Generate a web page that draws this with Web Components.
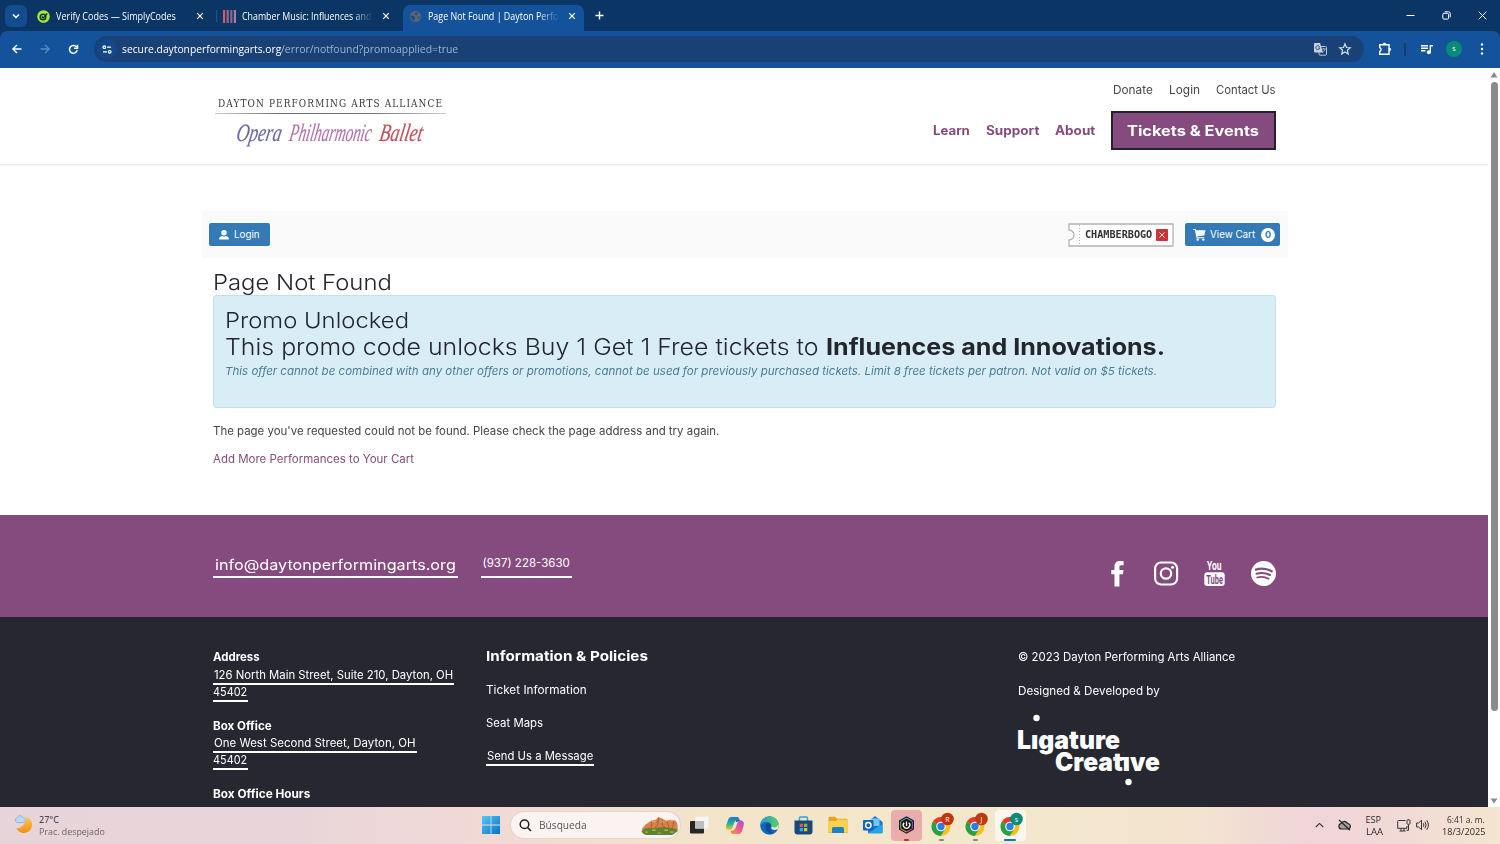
<!DOCTYPE html>
<html lang="en">
<head>
<meta charset="utf-8">
<title>Page Not Found | Dayton Performing Arts Alliance</title>
<style>
  * { box-sizing: border-box; }
  html, body { margin: 0; height: 844px; overflow: hidden; background: #fff; }
  body {
    display: flex;
    flex-direction: column;
    width: 1500px;
    font-family: Inter, "Liberation Sans", sans-serif;
  }
</style>
</head>
<body>
  <browser-chrome></browser-chrome>
  <page-viewport>
    <site-header></site-header>
    <site-main></site-main>
    <contact-band></contact-band>
    <site-footer></site-footer>
  </page-viewport>
  <task-bar></task-bar>

<script>
const base = `
  *, :host { box-sizing: border-box; }
  svg { display: block; overflow: visible; }
`;

function define(name, html) {
  const template = document.createElement('template');
  template.innerHTML = html;
  customElements.define(name, class extends HTMLElement {
    constructor() {
      super();
      this.attachShadow({ mode: 'open' }).appendChild(template.content.cloneNode(true));
    }
  });
}

// ---- icons ----
const chromeLogo = (color, letter) => `<svg width="21" height="24" viewBox="0 0 21 24">
  <circle cx="10" cy="13.500" r="9.500" fill="#fbc116"/>
  <path d="M10 13.500L1.800 8.700A9.500 9.500 0 0 1 18.200 8.700L10 8.700Z" fill="#e33b2e"/>
  <path d="M10 13.500L1.800 8.700A9.500 9.500 0 0 0 9.600 23L14.200 15.900Z" fill="#25a146"/>
  <circle cx="10" cy="13.500" r="4.800" fill="#fff"/><circle cx="10" cy="13.500" r="3.700" fill="#2b7de9"/>
  <circle cx="16.500" cy="6" r="6.300" fill="${color}"/>
  <text x="16.500" y="8.600" text-anchor="middle" font-size="7" font-family="Open Sans, sans-serif" fill="#fff">${letter}</text></svg>`;

const icons = {
  down: `<svg width="10" height="10" fill="none" stroke="#fff" stroke-width="1.500"><path d="M2 3.500L5 6.500L8 3.500"/></svg>`,
  close: `<svg width="8" height="8" stroke="#fff" stroke-width="1.200"><path d="M1.200 1.200L6.800 6.800M6.800 1.200L1.200 6.800"/></svg>`,
  plus: `<svg width="9" height="9" stroke="#fff" stroke-width="1.400"><path d="M4.500 .5V8.500M.5 4.500H8.500"/></svg>`,
  simply: `<svg width="13" height="13" viewBox="0 0 13 13"><circle cx="6.500" cy="6.500" r="6.300" fill="#a5e83d"/>
    <g fill="none" stroke="#163c22" stroke-width="1.500"><circle cx="6" cy="7" r="2.800"/><path d="M4.700 6.500L6.200 8L10.200 3.600"/></g></svg>`,
  bars: `<svg width="13" height="13"><path fill="#c4606c" d="M0 0h2.200v13H0z"/><path fill="#a5618a" d="M3.600 0h2.200v13h-2.200z"/><path fill="#8a6598" d="M7.200 0h2.200v13h-2.200z"/><path fill="#a87f9f" d="M10.800 0h2.200v13h-2.200z"/></svg>`,
  globe: `<svg width="13" height="13" viewBox="0 0 13 13"><circle cx="6.500" cy="6.500" r="5.500" fill="#5d6570"/><path fill="#144d90" d="M2 5.500L4.500 6L6 7.500L5.500 10.500Q3 10 2.200 7.500ZM6.500 2.200L9 3L8 5L6 4.800ZM8.500 7L10.800 6.500L9.800 9Z"/></svg>`,
  min: `<svg width="9" height="9" stroke="#fff"><path d="M.5 4.500H8.500"/></svg>`,
  restore: `<svg width="9" height="9" fill="none" stroke="#fff"><rect x=".8" y="2.300" width="5.800" height="5.800" rx="1.200"/><path d="M2.600 .8H6.600A1.600 1.600 0 0 1 8.200 2.400V6.300"/></svg>`,
  wclose: `<svg width="9" height="9" stroke="#fff"><path d="M.7 .7L8.300 8.300M8.300 .7L.7 8.300"/></svg>`,
  back: `<svg width="10" height="10" fill="none" stroke="#fff" stroke-width="1.400"><path d="M9.500 5H1.300M5 .9L.9 5L5 9.100"/></svg>`,
  forward: `<svg width="10" height="10" fill="none" stroke="#5c8cc4" stroke-width="1.300"><path d="M.5 5H8.700M5 .9L9.100 5L5 9.100"/></svg>`,
  reload: `<svg width="11" height="11" fill="none" stroke="#fff" stroke-width="1.500"><path d="M9.200 6.300A3.900 3.900 0 1 1 8.600 3.100"/><path d="M9.500 .8V4.200H6.100"/></svg>`,
  tune: `<svg width="10" height="9" fill="none" stroke="#fff" stroke-width="1.200"><circle cx="2.300" cy="2.200" r="1.300"/><path d="M5 2.200H9M1 6.800H5"/><circle cx="7.700" cy="6.800" r="1.300"/></svg>`,
  translate: `<svg width="13" height="13" viewBox="0 0 13 13"><rect x="5" y="3.500" width="7.500" height="8.700" rx="1" fill="none" stroke="#bcc9db"/><path d="M1 0H6L9 9.500H1A1 1 0 0 1 0 8.500V1A1 1 0 0 1 1 0Z" fill="#c8d0dc"/>
    <path d="M5.600 3.700A2 2 0 1 0 5.800 5H4" fill="none" stroke="#31507c"/><path d="M8 6h3.700M9.800 5v1M11 6.200C10.500 8 9 9 8.500 9.500" fill="none" stroke="#bcc9db" stroke-width=".8"/></svg>`,
  star: `<svg width="12" height="12" viewBox="0 0 12 12" fill="none" stroke="#d4deeb" stroke-width="1.200"><path d="M6 .9L7.500 4.500L11.300 4.800L8.400 7.300L9.300 11L6 9L2.700 11L3.600 7.300L.7 4.800L4.500 4.500Z"/></svg>`,
  puzzle: `<svg width="14" height="14" viewBox="0 0 14 14" fill="none" stroke="#fff" stroke-width="1.400"><path d="M1.700 2.800H11V12.200H1.700V9.400A2 2 0 0 0 1.700 5.600Z"/><path d="M5 2.500A1.400 1.400 0 0 1 7.800 2.500ZM11.300 6A1.400 1.400 0 0 1 11.300 8.800Z" fill="#fff" stroke-width=".8"/></svg>`,
  media: `<svg width="12" height="11" viewBox="0 0 12 11"><path d="M0 1.700H7M0 4.200H7M0 6.700H4.500M9.300 8V1.700H12" fill="none" stroke="#fff" stroke-width="1.400"/><circle cx="7.900" cy="8.200" r="2" fill="#fff"/></svg>`,
  dots: `<svg width="4" height="12" fill="#fff"><circle cx="2" cy="1.500" r="1.200"/><circle cx="2" cy="6" r="1.200"/><circle cx="2" cy="10.500" r="1.200"/></svg>`,
  user: `<svg width="10" height="10" viewBox="0 0 10 10" fill="#fff"><circle cx="5" cy="2.800" r="2.700"/><path d="M.2 9.500V8.500C.2 6.800 2 6.300 3.300 6.100Q5 7.200 6.700 6.100C8 6.300 9.800 6.800 9.800 8.500V9.500Z"/></svg>`,
  cart: `<svg width="13" height="12" viewBox="0 0 13 12" fill="#fff"><path d="M0 0H2.600L3 1.300H12.500L11.300 6.500L4.300 7.300L4.500 8.200H11.200V9.200H3.600L1.900 1H0Z"/><circle cx="4.700" cy="10.600" r="1.200"/><circle cx="10.300" cy="10.600" r="1.200"/></svg>`,
  facebook: `<svg width="13" height="26" viewBox="0 0 13 26" fill="#fff"><path d="M12.600 .2V4.300H10.200C8.700 4.300 8.400 5 8.400 6.100V8.900H12.500L12 13.200H8.400V25.400H3.500V13.200H.3V8.900H3.500V5.600C3.500 2 5.600 .1 9 .1C10.700 .1 12.100 .2 12.600 .2Z"/></svg>`,
  instagram: `<svg width="24" height="26" viewBox="0 0 24 26"><g fill="none" stroke="#fff" stroke-width="2.200"><rect x="1.100" y="1.500" width="22" height="22" rx="6"/><circle cx="12" cy="12.500" r="5.200"/></g><circle cx="18.600" cy="6.200" r="1.500" fill="#fff"/></svg>`,
  youtube: `<svg width="21" height="26" viewBox="0 0 21 26" font-family="Roboto, sans-serif" font-weight="700"><text x="3" y="8.900" font-size="12.500" textLength="14.500" lengthAdjust="spacingAndGlyphs" fill="#fff">You</text><rect x=".3" y="11.300" width="20.400" height="13.700" rx="3" fill="#fff"/>
    <text x="2.200" y="22.700" font-size="12.500" textLength="16.800" lengthAdjust="spacingAndGlyphs" fill="#864b7e">Tube</text></svg>`,
  spotify: `<svg width="25" height="26" viewBox="0 0 25 26"><circle cx="12.500" cy="12.500" r="12.500" fill="#fff"/><g fill="none" stroke="#864b7e" stroke-linecap="round"><path d="M4.900 8.600Q13 6.200 20.700 10.200" stroke-width="2.300"/><path d="M5.500 12.700Q12.500 10.600 19 14" stroke-width="2"/><path d="M6.100 16.500Q12.300 14.800 17.700 17.800" stroke-width="1.600"/></g></svg>`,
  weather: `<svg width="19" height="19" viewBox="0 0 19 19"><defs><linearGradient id="m" x2="0" y2="1"><stop stop-color="#fbc94a"/><stop offset="1" stop-color="#ef8f1c"/></linearGradient></defs><path d="M12.700 2A8.300 8.300 0 1 1 2.200 13.200Q10.500 13.500 12.700 2Z" fill="url(#m)"/>
    <path d="M2.800 7.600A2.600 2.600 0 0 1 3.200 2.700Q6 -1.300 8.600 2.300Q11.600 2.500 11.400 5.200Q11 7.600 9 7.600Z" fill="#bcd8f7" stroke="#7fa9dc" stroke-width=".7"/></svg>`,
  windows: `<svg width="18" height="18" viewBox="0 0 18 18"><defs><linearGradient id="w" x2="1" y2="1"><stop stop-color="#52c9f5"/><stop offset="1" stop-color="#0672ca"/></linearGradient></defs><path fill="url(#w)" d="M0 0H8.600V8.600H0ZM9.400 0H18V8.600H9.400ZM0 9.400H8.600V18H0ZM9.400 9.400H18V18H9.400Z"/></svg>`,
  search: `<svg width="13" height="13" fill="none" stroke="#222" stroke-width="1.500"><circle cx="5.500" cy="5.300" r="4.300"/><path d="M8.600 8.500L12 12"/></svg>`,
  canyon: `<svg width="38" height="19" viewBox="0 0 39 20"><path d="M0 15Q3 9 6 8L10 5L15 4L18 1L22 3L26 5L31 4L36 5L38 9V17Z" fill="#d98245"/><path d="M11 6L10 12M18 2L17 9L14 13M22 4L22 10L26 13M27 6L29 12M34 5L33 12" stroke="#a05c3c" fill="none"/><path d="M11 6H15M20 5L24 7M30 5H35" stroke="#f1ae6b"/>
    <path d="M0 16Q5 11 14 13Q23 10 38 14Q37 18 32 20H5Q1 19 0 16Z" fill="#5f8132"/><path d="M4 17h3M11 15h4M17 18h3M24 15h4M30 17h4" stroke="#a6b846" stroke-width="1.500"/></svg>`,
  desktops: `<svg width="19" height="18" viewBox="0 0 19 18"><rect x="0" y="5" width="14" height="12.500" rx="1" fill="#262626"/><rect x="5" y=".5" width="13.500" height="12" rx="1" fill="#f4f4f2"/><path d="M5 5H14V12.500H5Z" fill="#bdbdbb"/></svg>`,
  copilot: `<svg width="18" height="17" viewBox="0 0 18 17"><defs><linearGradient id="a" x2="0" y2="1"><stop stop-color="#1976d8"/><stop offset=".55" stop-color="#31b58a"/><stop offset="1" stop-color="#edca34"/></linearGradient><linearGradient id="b" x1="1" x2="0" y2="1"><stop stop-color="#a84be0"/><stop offset=".5" stop-color="#ec5c92"/><stop offset="1" stop-color="#f59b3f"/></linearGradient></defs>
    <path d="M10 0Q13 0 13.500 3.500H16L10 5Z" fill="#1b4fb8"/><path d="M5.500 0H11Q13 0 13.500 3L10 3.500Q8.500 4 7.800 7L6.300 11Q5.800 13 3 13Q-.8 13 .2 8.500L2 3Q3 0 5.500 0Z" fill="url(#a)"/><path d="M12.500 17H7Q5 17 4.500 14L7 13.500Q9.200 13 10 10L11.500 5.500Q12.200 3.500 15 3.500Q18.500 4 17.700 8L16 14Q15 17 12.500 17Z" fill="url(#b)"/></svg>`,
  edge: `<svg width="19" height="19" viewBox="0 0 19 19"><defs><linearGradient id="e" x1="0" x2="1"><stop stop-color="#2494d8"/><stop offset="1" stop-color="#5bd45b"/></linearGradient></defs><circle cx="9.500" cy="9.500" r="9.300" fill="#1566b8"/><path d="M.2 9.500A9.300 9.300 0 0 1 18.800 9.500Q18.500 13 14.500 13Q10.500 13 11.500 10.500Q11.500 6 7 6Q2 6 .2 9.500Z" fill="url(#e)"/>
    <path d="M8 7Q4.500 8 5.500 12.500Q7.500 18 13.500 17.500Q9 14.500 10.800 11Q11.800 8 8 7Z" fill="#0b4c97"/><path d="M10.500 9Q13 10 11.200 12.200Q12.500 15 18 13.300Q19 10 18.500 8Q17 12 13.500 11.500Z" fill="#eee4cc"/></svg>`,
  store: `<svg width="19" height="19" viewBox="0 0 19 19"><path d="M5.500 5V2.200Q5.500 1 6.700 1H12.300Q13.500 1 13.500 2.200V5" fill="none" stroke="#2aa5dd" stroke-width="1.500"/><path d="M.5 4.500H18.500V15.500Q18.500 18.500 15.500 18.500H3.500Q.5 18.500 .5 15.500Z" fill="#174a7c"/><path d="M5.700 7.700H9V11H5.700Z" fill="#f0532f"/><path d="M10 7.700H13.300V11H10Z" fill="#7fbb30"/><path d="M5.700 12H9V15.300H5.700Z" fill="#28a8e8"/><path d="M10 12H13.300V15.300H10Z" fill="#f8bb22"/></svg>`,
  folder: `<svg width="20" height="18" viewBox="0 0 20 18"><path d="M.5 2Q.5 .7 2 .7H7L9 2.700H18Q19.500 2.700 19.500 4V17H.5Z" fill="#e6a31e"/><path d="M.5 5H8L10 3.500H19.500V16.500H.5Z" fill="#fbd04e"/><path d="M4 17V12.500Q4 11 5.500 11H14.500Q16 11 16 12.500V17Z" fill="#1c82c4"/></svg>`,
  outlook: `<svg width="20" height="18" viewBox="0 0 20 18"><path d="M5 6L12 0L19.500 6V17H5Z" fill="#1377cb"/><path d="M8 2.500H16.500V10H8Z" fill="#71c8f3"/><path d="M5 17L19.500 8V16Q19.500 17.500 18 17.500H5Z" fill="#29a3e8"/><rect y="4" width="10.500" height="10.500" rx="1" fill="#1265b7"/><circle cx="5.300" cy="9.200" r="2.700" fill="none" stroke="#fff" stroke-width="1.500"/></svg>`,
  hexapp: `<svg width="17" height="18" viewBox="0 0 18 20"><path d="M9 .3L17.300 5V15L9 19.700L.7 15V5Z" fill="#191919"/><g fill="none" stroke-width="1.200"><path d="M2.500 6L9 2.300L15.500 6" stroke="#40a9d7"/><path d="M15.500 6V14" stroke="#8b53d0"/><path d="M15.500 14L9 17.700" stroke="#db4f9c"/><path d="M9 17.700L2.500 14" stroke="#e99b2e"/><path d="M2.500 14V6" stroke="#61bc4e"/><path d="M6.400 7.500A3.600 3.600 0 1 0 11.600 7.500M9 6V11" stroke="#fff" stroke-width="1.400"/></g></svg>`,
  chromeR: chromeLogo('#c2340e', 'R'),
  chromeJ: chromeLogo('#bd3a10', 'J'),
  chromeS: chromeLogo('#0b8a78', 's'),
  up: `<svg width="9" height="9" fill="none" stroke="#333" stroke-width="1.100"><path d="M.8 6L4.500 2.400L8.200 6"/></svg>`,
  cloud: `<svg width="13" height="12" viewBox="0 0 13 12"><path d="M3.500 10A2.700 2.700 0 0 1 2.900 4.700Q6.200 .2 9.700 4.500Q12.500 5 12.300 7.700Q12 10 9.700 10Z" fill="#a79fa0" stroke="#292527" stroke-width="1.200"/><path d="M1 1L12 11.300" stroke="#292527" stroke-width="1.200"/></svg>`,
  network: `<svg width="14" height="13" viewBox="0 0 14 13" fill="none" stroke="#333"><path d="M8.500 1.500H1.500Q.7 1.500 .7 2.300V9.300H10V7M4 9.500V12M7 9.500V12M2.500 12H8.500M11.500 6V11.300H9.500"/><rect x="10" y=".8" width="3" height="4.500" rx=".8"/></svg>`,
  sound: `<svg width="13" height="12" viewBox="0 0 13 12" fill="none" stroke="#333"><path d="M.6 4V8H2.600L5.500 10.700V1.300L2.600 4ZM7.300 4.200Q8.500 6 7.300 7.800M9 2.700Q11.200 6 9 9.300M10.700 1.200Q14 6 10.700 10.800"/></svg>`
};

class UiIcon extends HTMLElement {
  constructor() {
    super();
    this.attachShadow({ mode: 'open' });
  }
  connectedCallback() {
    this.shadowRoot.innerHTML = `<style>:host { display: block; flex: none; } ${base}</style>${icons[this.getAttribute('name')]}`;
  }
}

// Stretches a single line of text to a set width
class FitText extends HTMLElement {
  constructor() {
    super();
    this.attachShadow({ mode: 'open' }).innerHTML = `
      <style>
        :host { display: block; flex: none; white-space: nowrap; }
        span { display: inline-block; transform-origin: 0 50%; vertical-align: top; }
      </style><span><slot></slot></span>`;
  }
  connectedCallback() {
    const w = Number(this.getAttribute('w'));
    const span = this.shadowRoot.querySelector('span');
    this.style.width = w + 'px';
    span.style.transform = `scaleX(${w / span.offsetWidth})`;
  }
}

// ---- browser window ----
define('browser-tab', `
  <style>${base}
    :host { display: flex; align-items: center; height: 26px; padding: 0 9px 4px 10px; align-self: flex-end; }
    .title { flex: 1; margin-left: 6px; overflow: hidden; line-height: 18px; height: 18px; }
    .close { width: 14px; display: flex; justify-content: center; }
    :host([cut]) .title { -webkit-mask: linear-gradient(90deg, #000 84%, transparent 100%); mask: linear-gradient(90deg, #000 84%, transparent 100%); }
    :host([cut]) .title { margin-right: 6px; }
  </style>
  <slot name="icon"></slot>
  <div class="title"><slot></slot></div>
  <div class="close"><ui-icon name="close"></ui-icon></div>
`);

define('browser-chrome', `
  <style>${base}
    :host { display: block; height: 68px; flex: none; background: #0b3564; color: #fff; font: 10px "Open Sans", "Noto Sans", sans-serif; }
    .tabs { display: flex; height: 31px; align-items: center; }
    .list { width: 22px; height: 22px; margin: 1px 0 0 5px; border-radius: 6px; background: #134c8f; display: flex; align-items: center; justify-content: center; }
    .cell { display: flex; align-items: center; justify-content: center; width: 36px; height: 31px; }
    .t1 { width: 189px; }
    .t2 { width: 187px; padding-left: 7px; padding-right: 10px; background: linear-gradient(#1a5596, #1a5596) 0 5px / 1px 12px no-repeat; }
    .t3 { width: 181px; padding-left: 6px; padding-right: 5px; background: #14529b; border-radius: 7px 7px 0 0; }
    .bar { display: flex; align-items: center; height: 37px; padding: 0 0 1px 3px; background: #14529b; border-radius: 7px 7px 0 0; }
    .btn { width: 28px; display: flex; justify-content: center; }
    .url { display: flex; align-items: center; width: 1270px; height: 26px; margin-left: 7px; padding-left: 3px; border-radius: 14px; background: #1a4175; font-size: 11px; line-height: 16px; color: #9cb4d4; }
    .site { width: 20px; height: 20px; margin-right: 5px; border-radius: 50%; background: #14488a; display: flex; align-items: center; justify-content: center; }
    .host { color: #fff; }
    .sep { width: 2px; height: 13px; margin: 0 7px 0 5px; background: #123d73; }
    .me { width: 16px; height: 16px; margin: 0 6px 0 5px; border-radius: 50%; background: #0a8b78; font-size: 7px; line-height: 16px; text-align: center; }
  </style>
  <div class="tabs">
    <div class="list"><ui-icon name="down"></ui-icon></div>
    <browser-tab class="t1"><ui-icon slot="icon" name="simply"></ui-icon><fit-text w="120">Verify Codes — SimplyCodes</fit-text></browser-tab>
    <browser-tab class="t2" cut><ui-icon slot="icon" name="bars"></ui-icon><fit-text w="129">Chamber Music: Influences and</fit-text></browser-tab>
    <browser-tab class="t3" cut><ui-icon slot="icon" name="globe"></ui-icon><fit-text w="130">Page Not Found | Dayton Perfo</fit-text></browser-tab>
    <div class="cell" style="width:31px"><ui-icon name="plus"></ui-icon></div>
    <div class="cell" style="margin-left:auto"><ui-icon name="min"></ui-icon></div>
    <div class="cell"><ui-icon name="restore"></ui-icon></div>
    <div class="cell"><ui-icon name="wclose"></ui-icon></div>
  </div>
  <div class="bar">
    <div class="btn"><ui-icon name="back"></ui-icon></div>
    <div class="btn"><ui-icon name="forward"></ui-icon></div>
    <div class="btn"><ui-icon name="reload"></ui-icon></div>
    <div class="url">
      <div class="site"><ui-icon name="tune"></ui-icon></div>
      <fit-text class="host" w="159">secure.daytonperformingarts.org</fit-text><fit-text w="177">/error/notfound?promoapplied=true</fit-text>
      <ui-icon name="translate" style="margin-left:auto"></ui-icon>
      <ui-icon name="star" style="margin:0 13px 0 12px"></ui-icon>
    </div>
    <div class="btn" style="margin-left:7px"><ui-icon name="puzzle"></ui-icon></div>
    <div class="sep"></div>
    <div class="btn"><ui-icon name="media"></ui-icon></div>
    <div class="me">s</div>
    <div class="btn"><ui-icon name="dots"></ui-icon></div>
  </div>
`);

define('page-viewport', `
  <style>${base}
    :host { display: flex; height: 739px; flex: none; overflow: hidden; background: #fff; }
    .page { width: 1488px; overflow: hidden; }
    .scroll { width: 12px; display: flex; flex-direction: column; align-items: center; padding: 4px 0 3px; }
    .thumb { width: 7px; height: 629px; margin: 4px 0 auto; border-radius: 4px; background: #8b8b8b; }
  </style>
  <div class="page"><slot></slot></div>
  <div class="scroll">
    <svg width="8" height="6"><path d="M4 0L7.500 5.500H.5Z" fill="#8b8b8b"/></svg>
    <div class="thumb"></div>
    <svg width="8" height="6"><path d="M4 5.500L7.500 .5H.5Z" fill="#8b8b8b"/></svg>
  </div>
`);

// ---- site ----
define('site-logo', `
  <style>${base}
    :host { display: block; width: 231px; padding-top: 28px; }
    .name { margin-left: 3px; font: 10.500px/15px "DejaVu Serif", serif; letter-spacing: 1.300px; color: #3c3a3c; }
    .rule { height: 1px; margin: 2px 0 0; background: linear-gradient(90deg, #ccc, #6a6668 30%, #777 70%, #ccc); }
    .arts { display: flex; gap: 8px; margin: 3px 0 0 21.500px; font: italic 25px/32px "Liberation Serif", serif; transform: skewX(-10deg); -webkit-text-stroke: .2px; }
  </style>
  <fit-text class="name" w="225">DAYTON PERFORMING ARTS ALLIANCE</fit-text>
  <div class="rule"></div>
  <div class="arts">
    <fit-text w="45" style="color:#6d689f">Opera</fit-text>
    <fit-text w="82" style="color:#b273ab">Philharmonic</fit-text>
    <fit-text w="43" style="color:#c4505f">Ballet</fit-text>
  </div>
`);

define('site-header', `
  <style>${base}
    :host { display: flex; justify-content: space-between; height: 97px; padding: 0 212px 0 215px; border-bottom: 1px solid #ececec; box-shadow: 0 1px 2px #f3f3f3; }
    .nav { padding-top: 12px; }
    .row { display: flex; justify-content: flex-end; align-items: center; gap: 16px; }
    .top { height: 20px; font-size: 11.500px; line-height: 20px; color: #46464c; padding-right: .5px; }
    .main { margin-top: 11px; height: 39px; font-size: 12.500px; line-height: 19px; font-weight: 700; color: #864b7e; }
    .main > fit-text { padding-bottom: 1px; }
    .cta { height: 39px; padding: 0 15px 0 14px; border: 2px solid #23232d; background: #864b7e; color: #fff; font-size: 14px; line-height: 35px; }
  </style>
  <site-logo></site-logo>
  <div class="nav">
    <div class="row top"><fit-text w="40">Donate</fit-text><fit-text w="31">Login</fit-text><fit-text w="60">Contact Us</fit-text></div>
    <div class="row main">
      <fit-text w="37">Learn</fit-text><fit-text w="53">Support</fit-text><fit-text w="40">About</fit-text>
      <div class="cta"><fit-text w="132">Tickets &amp; Events</fit-text></div>
    </div>
  </div>
`);

define('blue-button', `
  <style>${base}
    :host { display: flex; align-items: center; height: 24px; border-radius: 2px; background: #337ab7; color: #fff; font-size: 9.800px; line-height: 24px; }
  </style>
  <slot></slot>
`);

define('promo-ticket', `
  <style>${base}
    :host { display: grid; width: 106px; height: 24px; margin-right: 11.500px; }
    svg, .in { grid-area: 1 / 1; }
    .in { display: flex; align-items: center; padding-left: 17px; font: 700 10px/24px "DejaVu Sans Mono", monospace; color: #333; }
    .x { width: 12px; height: 12px; margin-left: 4px; background: #cf3232; border-radius: 1px; display: flex; align-items: center; justify-content: center; }
  </style>
  <svg width="106" height="24" fill="#fff" stroke="#b3b3b3"><path stroke-width="1.300" d="M1 1H105V23H1V17A5 5 0 0 0 1 7Z"/><path stroke-dasharray="1 2" d="M11.500 2V22"/></svg>
  <div class="in"><fit-text w="67"><slot></slot></fit-text><div class="x"><svg width="6" height="6" stroke="#fff"><path d="M.5 .5L5.500 5.500M5.500 .5L.5 5.500"/></svg></div></div>
`);

define('promo-notice', `
  <style>${base}
    :host { display: block; height: 113px; padding: 11px 11px 0; border: 1px solid #bfe3ee; border-radius: 3px; background: #d9edf7; color: #24262f; }
    .h { font-size: 22px; font-weight: 300; line-height: 26px; }
    .line { display: flex; gap: 7px; font-size: 23px; line-height: 29px; }
    .small { font-size: 11px; line-height: 18px; font-style: italic; color: #487d96; }
  </style>
  <fit-text class="h" w="184.500">Promo Unlocked</fit-text>
  <div class="line"><fit-text w="594" style="font-weight:350">This promo code unlocks Buy 1 Get 1 Free tickets to</fit-text><fit-text w="339" style="font-weight:700">Influences and Innovations.</fit-text></div>
  <fit-text class="small" w="932">This offer cannot be combined with any other offers or promotions, cannot be used for previously purchased tickets. Limit 8 free tickets per patron. Not valid on $5 tickets.</fit-text>
`);

define('site-main', `
  <style>${base}
    :host { display: block; height: 350px; padding-top: 46px; }
    .bar { display: flex; align-items: center; justify-content: space-between; width: 1086px; height: 47px; margin-left: 202px; padding: 0 8px 0 7px; background: #fafafa; }
    .right { display: flex; }
    .body { margin: 11px 212px 0 213px; font-size: 11.200px; line-height: 18px; color: #43434a; }
    .title { font-size: 22px; font-weight: 300; line-height: 26px; color: #24262f; }
    .count { width: 14px; height: 14px; margin-left: 6px; border-radius: 50%; background: #fff; color: #337ab7; font-size: 9px; font-weight: 700; line-height: 14px; text-align: center; }
    blue-button { height: 23px; line-height: 23px; }
  </style>
  <div class="bar">
    <blue-button style="width:61px;padding-left:10px"><ui-icon name="user"></ui-icon><fit-text w="26" style="margin-left:5px">Login</fit-text></blue-button>
    <div class="right">
      <promo-ticket style="height:23px">CHAMBERBOGO</promo-ticket>
      <blue-button style="width:95px;padding-left:8px"><ui-icon name="cart"></ui-icon><fit-text w="45" style="margin-left:4px">View Cart</fit-text><span class="count">0</span></blue-button>
    </div>
  </div>
  <div class="body">
    <fit-text class="title" w="179">Page Not Found</fit-text>
    <promo-notice></promo-notice>
    <fit-text w="506" style="margin-top:14px">The page you've requested could not be found. Please check the page address and try again.</fit-text>
    <fit-text w="201" style="margin-top:10px;color:#864b7e">Add More Performances to Your Cart</fit-text>
  </div>
`);

define('contact-band', `
  <style>${base}
    :host { display: flex; justify-content: space-between; align-items: flex-start; height: 102px; padding: 0 212px 0 213px; background: #864b7e; color: #fff; }
    .links { display: flex; align-items: flex-end; gap: 23px; height: 63px; line-height: 18px; }
    .links div { padding: 0 2.500px 0 1.500px; border-bottom: 2px solid #fff; }
    .mail { height: 22px; font-size: 14.500px; }
    .tel { height: 24px; font-size: 11.500px; }
    .social { display: flex; padding-top: 46px; }
  </style>
  <div class="links">
    <div class="mail"><fit-text w="241">info@daytonperformingarts.org</fit-text></div>
    <div class="tel"><fit-text w="87">(937) 228-3630</fit-text></div>
  </div>
  <div class="social">
    <ui-icon name="facebook" style="margin-right:30px"></ui-icon>
    <ui-icon name="instagram" style="margin-right:26px"></ui-icon>
    <ui-icon name="youtube" style="margin-right:26px"></ui-icon>
    <ui-icon name="spotify"></ui-icon>
  </div>
`);

define('under-line', `
  <style>${base}
    :host { display: block; width: fit-content; height: 17px; line-height: 15px; border-bottom: 2px solid #fff; padding: 0 1px; }
  </style>
  <slot></slot>
`);

define('site-footer', `
  <style>${base}
    :host { display: grid; grid-template-columns: 273px 531.600px 1fr; height: 190px; padding: 31px 0 0 213px; background: #262730; color: #fff; font-size: 11.200px; line-height: 18px; overflow: hidden; }
    .b { font-weight: 700; }
    .h { font-size: 13.500px; font-weight: 700; margin: -1px 0 16px; }
  </style>
  <div>
    <fit-text class="b" w="47" style="margin-bottom:2px">Address</fit-text>
    <under-line><fit-text w="239">126 North Main Street, Suite 210, Dayton, OH</fit-text></under-line>
    <under-line style="padding-left:0"><fit-text w="34">45402</fit-text></under-line>
    <fit-text class="b" w="59" style="margin:15px 0 1px">Box Office</fit-text>
    <under-line><fit-text w="202">One West Second Street, Dayton, OH</fit-text></under-line>
    <under-line style="padding-left:0"><fit-text w="34">45402</fit-text></under-line>
    <fit-text class="b" w="97" style="margin-top:15px">Box Office Hours</fit-text>
  </div>
  <div style="padding-left:.4px">
    <fit-text class="h" w="162.500">Information &amp; Policies</fit-text>
    <fit-text w="101">Ticket Information</fit-text>
    <fit-text w="57" style="margin-top:15px">Seat Maps</fit-text>
    <under-line style="margin-top:17px"><fit-text w="106">Send Us a Message</fit-text></under-line>
  </div>
  <div>
    <fit-text w="217">© 2023 Dayton Performing Arts Alliance</fit-text>
    <fit-text w="141.500" style="margin-top:16px">Designed &amp; Developed by</fit-text>
    <svg width="142" height="72" style="margin-top:14px" fill="#fff" font-family="Inter, sans-serif" font-weight="900" font-size="25.500">
      <text x="-1" y="35" textLength="103" lengthAdjust="spacingAndGlyphs">Ligature</text>
      <text x="37" y="57" textLength="105" lengthAdjust="spacingAndGlyphs">Creative</text>
      <!-- the dots of both i's sit away from their stems -->
      <path fill="#262730" d="M14 13H24V20.500H14ZM105.800 35.500H115V42.300H105.800Z"/>
      <path d="M101 43H108V46.300H101Z"/>
      <circle cx="18.500" cy="4" r="3.200"/><circle cx="110.500" cy="68" r="3.200"/>
    </svg>
  </div>
`);

// ---- taskbar ----
define('task-item', `
  <style>${base}
    :host { display: flex; width: 34.400px; height: 37px; padding-bottom: 1px; justify-content: center; align-items: center; flex: none; }
    .tile { display: grid; width: 31px; height: 31px; border-radius: 4px; place-items: center; background: var(--tile, none); }
    ::slotted(*), i { grid-area: 1 / 1; }
    i { align-self: end; width: var(--dot-w, 0); height: 2px; border-radius: 1px; background: var(--dot, #8b8783); }
  </style>
  <div class="tile"><slot></slot><i></i></div>
`);

define('task-bar', `
  <style>${base}
    :host { display: flex; height: 37px; flex: none; align-items: center; color: #2e2a2d; font: 9px/12px "Open Sans", "Noto Sans", sans-serif;
      background: linear-gradient(90deg, #e7d4d9 0, #e9d5d9 300px, #f1d9d6 480px, #f1dfd0 600px, #f3e4c9 720px, #f3e8cd 1000px, #f3e3d0 1200px, #f0d5d8 1310px, #f2dad6 1400px, #f4e5d0 1500px); }
    .weather { display: flex; align-items: center; gap: 6px; width: 474px; padding: 0 0 0 14px; }
    .weather ui-icon { margin-bottom: 2px; }
    .search { display: flex; align-items: center; width: 169px; height: 26px; margin: 0 2px 1px 3px; padding: 0 1px 0 8px; border-radius: 13px; background: #faf3f1; box-shadow: 0 0 0 1px #e4d3cf; font-size: 11px; color: #59545a; }
    .tray { display: flex; align-items: center; margin-left: auto; padding-right: 15px; }
    .tray ui-icon { margin-bottom: 1px; }
    .clock { display: flex; flex-direction: column; align-items: flex-end; margin-left: 13px; font-size: 9.500px; }
  </style>
  <div class="weather"><ui-icon name="weather"></ui-icon>
    <div><fit-text w="20">27°C</fit-text><fit-text w="66" style="color:#6e6468">Prac. despejado</fit-text></div>
  </div>
  <task-item style="width:34px"><ui-icon name="windows"></ui-icon></task-item>
  <div class="search"><ui-icon name="search"></ui-icon><fit-text w="48" style="margin-left:7px">Búsqueda</fit-text><ui-icon name="canyon" style="margin-left:auto"></ui-icon></div>
  <task-item style="width:35.800px"><ui-icon name="desktops"></ui-icon></task-item>
  <task-item><ui-icon name="copilot"></ui-icon></task-item>
  <task-item><ui-icon name="edge"></ui-icon></task-item>
  <task-item><ui-icon name="store"></ui-icon></task-item>
  <task-item><ui-icon name="folder"></ui-icon></task-item>
  <task-item><ui-icon name="outlook"></ui-icon></task-item>
  <task-item style="--tile:#e9adad;--dot:#c42b1c;--dot-w:5px"><ui-icon name="hexapp"></ui-icon></task-item>
  <task-item style="--dot-w:5px"><ui-icon name="chromeR"></ui-icon></task-item>
  <task-item style="--dot-w:5px"><ui-icon name="chromeJ"></ui-icon></task-item>
  <task-item style="--tile:#fbf6ee;--dot:#1474c4;--dot-w:12px"><ui-icon name="chromeS"></ui-icon></task-item>
  <div class="tray">
    <ui-icon name="up"></ui-icon>
    <ui-icon name="cloud" style="margin-left:14px;margin-right:15px"></ui-icon>
    <div><fit-text w="15">ESP</fit-text><fit-text w="17">LAA</fit-text></div>
    <ui-icon name="network" style="margin-left:14px;margin-right:5px"></ui-icon>
    <ui-icon name="sound"></ui-icon>
    <div class="clock"><fit-text w="38">6:41 a. m.</fit-text><fit-text w="43.500">18/3/2025</fit-text></div>
  </div>
`);

customElements.define('ui-icon', UiIcon);
customElements.define('fit-text', FitText);
</script>
</body>
</html>
